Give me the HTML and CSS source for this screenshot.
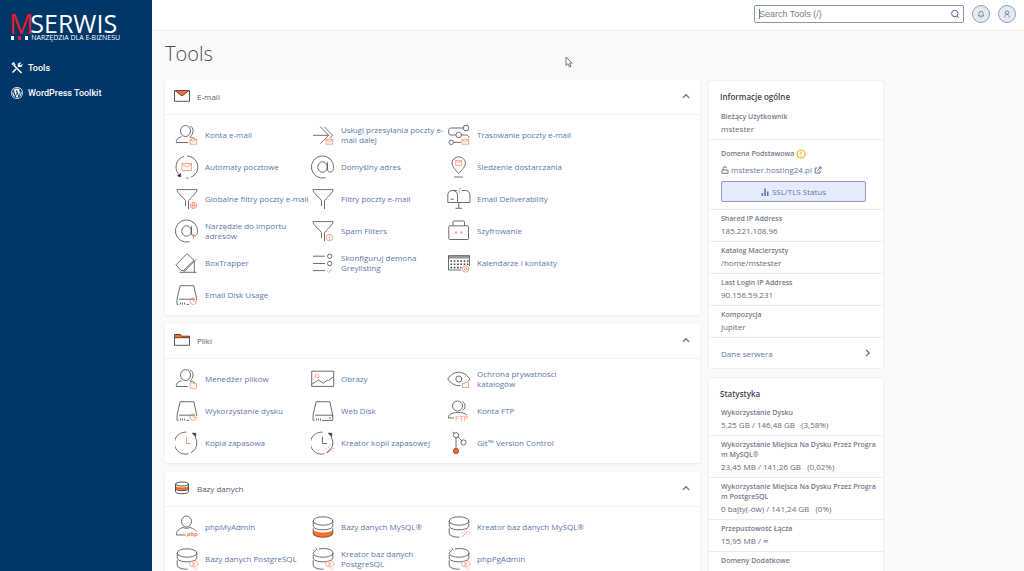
FILE: index.html
```html
<!DOCTYPE html>
<html lang="pl">
<head>
<meta charset="utf-8">
<meta name="viewport" content="width=device-width, initial-scale=1">
<title>cPanel - Tools</title>
<link rel="stylesheet" href="styles.css">
</head>
<body>
<svg class="sprite" aria-hidden="true">
  <symbol id="b-mail" viewBox="0 0 24 24"><path class="o" d="M15 16.3h6.7v4.9H15zM15 16.5l3.3 2.4 3.4-2.4"/></symbol>
  <symbol id="b-user" viewBox="0 0 24 24"><ellipse cx="10.5" cy="8" rx="5" ry="5.5"/><path d="M15 3c2 .7 3.2 2.7 3 5.2-.2 2.5-1.3 4.3-2.6 5.4M13 19.5H1.5c-.8-2.5 1-4.7 5-5.7M14.6 14c2.2.2 4.2.9 5.2 1.7"/></symbol>
  <symbol id="b-filter" viewBox="0 0 24 24"><path d="M2 2.6h20v1.2c-2 3.2-6.8 7.8-8.5 9.9V22M2 2.6v1.2c2 3.2 6.8 7.8 8.5 9.9V19"/></symbol>
  <symbol id="b-at" viewBox="0 0 24 24"><ellipse cx="11.5" cy="12" rx="4.8" ry="5.2"/><path d="M16.4 6.8v7.4c0 4.2 6.2 4.2 6.2-2.2a11.1 11.1 0 1 0-8.2 10.7"/></symbol>
  <symbol id="b-disk" viewBox="0 0 24 24"><path d="M5.2 2.7h13.6l2.9 13.5v1M5.2 2.7 2 16.2v5.2h1.5M4 16.2h16M5.5 19.5v2M7.5 19.5v2M9.5 19.5v2"/></symbol>
  <symbol id="b-clock" viewBox="0 0 24 24"><path d="M11.5 1.2a11 11 0 1 0 2 21.5M16 21.8a11 11 0 0 0 4-16"/><path class="k" d="M17.3 2.2h3.4v3.5z"/></symbol>
  <symbol id="b-pie" viewBox="0 0 24 24"><path class="o" d="M18.3 14.8a3.3 3.3 0 1 0 3.3 3.4h-3.3z"/></symbol>
  <symbol id="b-db" viewBox="0 0 24 24"><ellipse cx="12" cy="6" rx="9.8" ry="4.2"/><path d="M2.2 6v5c0 2.3 4.4 3.8 9.8 3.8s9.8-1.5 9.8-3.8V6M2.2 13.3v5c0 2.2 4.2 3.8 9.5 3.9h1"/></symbol>
  <symbol id="b-wand" viewBox="0 0 24 24"><path class="o" d="M15 22l6-6M17 16l1 1M21.5 19.5l.8.8M20 21.5l.6.6M16 18l-1-.5M19 15v-1M22 17.5h1"/></symbol>
  <symbol id="b-pg" viewBox="0 0 24 24"><path class="o" d="M19 21.5v-6M17 20c-2-1-3-4-1.5-5.5 1-.8 2.5-.3 2.5 1V19zM20.2 15c2-1.3 3.2.4 2.5 2.4-.5 1.5-1.6 2.5-2.5 2.5M20 22.5h1.5"/></symbol>

  <symbol id="i-accounts" viewBox="0 0 24 24"><use href="#b-user"/><use href="#b-mail"/></symbol>
  <symbol id="i-forward" viewBox="0 0 24 24"><path d="M2 12.3h15.5M9.2 3.6l8.5 8.7-5.3 5.3-3 2.9M13.2 3.6l8.3 8.7-2.8 2.9"/><use href="#b-mail"/></symbol>
  <symbol id="i-routing" viewBox="0 0 24 24"><circle cx="19" cy="5" r="2.8"/><circle cx="11.7" cy="12" r="2.8"/><circle cx="4.2" cy="19.3" r="2.2"/><path d="M16.2 5H3.7C1.4 5 1.5 8 1.7 10.2c.2 1.4 1 1.8 2.3 1.8h4.9M14.5 12h4.8c1.8 0 2.6 1 2.6 2.8M6.5 19.3h7.7"/><use href="#b-mail"/></symbol>
  <symbol id="i-auto" viewBox="0 0 24 24"><path d="M12 1a11 11 0 0 1 4 21.2M9 1.4a11 11 0 0 0-4 19M11 23h2.5"/><path class="k" d="M2.5 20.8l3.3-2.3v3.4z"/><path class="o" d="M7 8.5h9.5v7H7zM7 8.8l4.8 3.4 4.7-3.4"/></symbol>
  <symbol id="i-at" viewBox="0 0 24 24"><use href="#b-at"/></symbol>
  <symbol id="i-pin" viewBox="0 0 24 24"><path d="M11.7 18.5C8.5 15 5 11.5 5 7.8a6.8 6.8 0 0 1 13.5 0c0 3.7-3.6 7.2-6.8 10.7zM7 22h9"/><path class="o" d="M8.7 5.4h6v5h-6zM8.7 5.6l3 2.3 3-2.3"/></symbol>
  <symbol id="i-gfilter" viewBox="0 0 24 24"><use href="#b-filter"/><path class="o" d="M18.5 15.2a3.2 3.2 0 1 0 .1 0zM15.3 18.4h6.4M18.5 15.2c-1.5 2-1.5 4.4 0 6.4M18.5 15.2c1.5 2 1.5 4.4 0 6.4"/></symbol>
  <symbol id="i-filter" viewBox="0 0 24 24"><use href="#b-filter"/></symbol>
  <symbol id="i-mailbox" viewBox="0 0 24 24"><path d="M10 15.5H.8V8C.8 5 3 3.5 5.5 3.5S10.5 5 10.5 8v7.5H23V9c0-3.5-1.5-5.5-4.5-5.5h-4M5.5 3.5H10M3.5 12.2H7M11.8 15.5V21M8.5 21.3h6.5"/><path class="o" d="M12.3 6.5V1.7h2"/></symbol>
  <symbol id="i-import" viewBox="0 0 24 24"><use href="#b-at"/><path class="o" d="M18.5 20v-5M16.3 17l2.2-2.2 2.2 2.2"/></symbol>
  <symbol id="i-spam" viewBox="0 0 24 24"><use href="#b-filter"/><circle class="o" cx="18.5" cy="18.5" r="3.3"/><path class="o" d="M18.5 16.5v2.4M18.5 19.7v.9"/></symbol>
  <symbol id="i-lock" viewBox="0 0 24 24"><path d="M2.7 6.8h18c.6 0 .8.3.8.9v12c0 .6-.3.8-.9.8h-18c-.6 0-.8-.3-.8-.9v-12c0-.6.3-.8.9-.8zM6 6.800V3c0-.6.4-1 1-1h9.500c.6 0 1 .4 1 1v3.800"/><path class="of soft" d="M8 12.6h2v2H8zM13.5 12.6h2v2h-2z"/></symbol>
  <symbol id="i-box" viewBox="0 0 24 24"><path d="M1 13.8 12 2.6l7 6.7L8.5 19.500H6zM8.500 21.300l12.700-13M19.300 10v11.300M4.500 21.300h17"/></symbol>
  <symbol id="i-grey" viewBox="0 0 24 24"><path d="M2 5.2h12M2 12.5h12M2 19.6h12"/><circle cx="18.7" cy="5.2" r="2.2"/><circle cx="18.7" cy="12.5" r="2.2"/><path class="o" d="M16 19.8l1.7 1.7 3.3-3.7"/></symbol>
  <symbol id="i-cal" viewBox="0 0 24 24"><path class="g" d="M1.3 4.8h21.2v2.8H1.3z"/><path d="M14 19H1.5V4.6h21V15"/><path class="d" d="M3.5 10h18M3.5 13.3h18M3.5 16.6h11"/><circle class="o" cx="18.7" cy="18" r="3.2"/><circle class="o" cx="18.7" cy="18" r="1.3"/></symbol>
  <symbol id="i-usage" viewBox="0 0 24 24"><use href="#b-disk"/><path d="M11.5 21.4H14"/><use href="#b-pie"/></symbol>
  <symbol id="i-webdisk" viewBox="0 0 24 24"><use href="#b-disk"/><path d="M11 21.4h10.7v-5.2H20"/><path class="of soft" d="M18 18h2v2h-2z"/></symbol>
  <symbol id="i-files" viewBox="0 0 24 24"><use href="#b-user"/><path class="o" d="M15 15.8h2.5l.8.9h3.2v4.6H15z"/></symbol>
  <symbol id="i-images" viewBox="0 0 24 24"><path d="M.7 4.2h22v15.2H.7zM.7 17.3 7.5 13l4.8 3.2 4-3 1.2.3 5-3.7"/><circle class="o" cx="6.2" cy="9" r="1.9"/></symbol>
  <symbol id="i-eye" viewBox="0 0 24 24"><path d="M13.5 18.5C8 19.5 3.5 16 .8 12c5.7-9 16-9 22 0-.7 1-1.3 1.8-2.1 2.5"/><circle cx="11.8" cy="12" r="3"/><path class="o" d="M15.3 16.6h2.5V15.5h3.7v5h-6.2z"/></symbol>
  <symbol id="i-backup" viewBox="0 0 24 24"><use href="#b-clock"/><path class="o" d="M11.5 5.5v7H16"/></symbol>
  <symbol id="i-wizard" viewBox="0 0 24 24"><use href="#b-clock"/><path d="M11.5 5.5v7H16"/><use href="#b-wand"/></symbol>
  <symbol id="i-git" viewBox="0 0 24 24"><circle cx="9" cy="4.2" r="2.6"/><circle cx="16.5" cy="11.5" r="2.6"/><path d="M9 7v10M11 6l3.7 3.7M5.5 1l2 1.5"/><circle class="of k2" cx="9" cy="20" r="2.6"/></symbol>
  <symbol id="i-mysql" viewBox="0 0 24 24"><path class="of" d="M2.2 14.5v4c0 5 19.6 5 19.6 0v-4c-1 4-18.6 4-19.6 0z"/><use href="#b-db"/><path d="M12.5 22.2c5-.1 9.3-1.7 9.3-3.9v-5"/></symbol>
  <symbol id="i-dbwiz" viewBox="0 0 24 24"><use href="#b-db"/><use href="#b-wand"/></symbol>
  <symbol id="i-pg" viewBox="0 0 24 24"><use href="#b-db"/><use href="#b-pg"/></symbol>
  <symbol id="i-pgwiz" viewBox="0 0 24 24"><path d="M8 2c8-1.5 14 1 14 4 0 2.3-4.6 4.2-10 4.2S2.2 8.5 2.2 6l4-4M2 3l1 .5M5 .8V2M2.2 8v3c0 2.3 4.4 3.8 9.8 3.8s9.8-1.5 9.8-3.8V6M2.2 13.3v5c0 2.2 4.2 3.8 9.5 3.9h1"/><use href="#b-pg"/></symbol>
  <symbol id="h-mail" viewBox="0 0 16 14"><path class="ofk" d="M1 1.5h14L8 7z"/><path d="M.5 1.5h15v10.8H.5z"/></symbol>
  <symbol id="h-folder" viewBox="0 0 16 14"><path class="ofk" d="M.5 1.5h6l1 1.7h8v1.5H.5z"/><path d="M.5 1.5v10.8h15V3.2"/></symbol>
  <symbol id="h-db" viewBox="0 0 16 14"><path class="of" d="M1.5 4.5c0 2.5 13 2.5 13 0v3c0 2.5-13 2.5-13 0z"/><ellipse cx="8" cy="3" rx="6.5" ry="2"/><path d="M1.5 3v7.8c0 2.5 13 2.5 13 0V3M1.5 8c0 2.2 13 2.2 13 0"/></symbol>
  <symbol id="chev" viewBox="0 0 8 8"><path d="M1.5 5.5 4 3l2.500 2.500"/></symbol>
</svg>

<div class="shell">
  <aside class="side">
    <a class="logo" href="#" aria-label="MSERWIS">
      <span class="logo-m">M<span class="dots"><i></i><i class="red"></i><i></i></span></span>
      <span class="logo-r"><span class="logo-name">SERWIS</span><span class="logo-sub">NARZĘDZIA DLA E-BIZNESU</span></span>
    </a>
    <nav class="nav">
      <a href="#"><svg class="nav-ic" viewBox="0 0 12 12"><path d="M2.5 3 10.5 11M1 2.6 2.6 1l1.6 2.5M7 5l2-2M1.5 10.5 5 7" fill="none" stroke="currentColor" stroke-width="1.5"/><path d="M10.3.8 8.5 2.5l1 1L11.3 1.8a2.4 2.4 0 0 1-3.3 3L7 4a2.4 2.4 0 0 1 3.3-3.2z" fill="currentColor"/></svg>Tools</a>
      <a href="#"><svg class="nav-ic" viewBox="0 0 24 24" fill="currentColor"><path d="M12 0a12 12 0 1 0 0 24 12 12 0 0 0 0-24zm0 1.3a10.7 10.7 0 1 1 0 21.4 10.7 10.7 0 0 1 0-21.4z"/><path d="M2.9 12c0 3.600 2.100 6.700 5.100 8.200L3.700 8.300A9 9 0 0 0 2.900 12zm15.200-.5c0-1.100-.4-1.900-.7-2.500-.5-.7-.9-1.300-.9-2.100 0-.8.6-1.600 1.500-1.600A9.100 9.100 0 0 0 4.400 7h2.700c.5 0 .5.7 0 .7l-1 .1 3.300 9.800 2-5.900-1.400-3.900-1-.1c-.5 0-.4-.7.1-.7h4.300c.5 0 .6.7.1.7l-1 .1 3.300 9.700.9-3c.4-1.200.4-2.200.4-3zm-6 1.300-2.700 7.900a9 9 0 0 0 5.600-.1zm7.900-5.200c.2 1.600-.1 3.100-.7 4.600l-2.800 8A9.100 9.100 0 0 0 20 7.600z"/></svg>WordPress Toolkit</a>
    </nav>
  </aside>

  <div class="page">
    <header class="top">
      <form class="search" role="search">
        <input type="search" aria-label="Search Tools" placeholder="Search Tools (/)">
        <button type="button" aria-label="Search"><svg viewBox="0 0 10 10"><circle cx="4.8" cy="4.5" r="3.2"/><path d="M7 7l1.8 1.8"/></svg></button>
      </form>
      <button class="round" type="button" aria-label="Notifications"><svg viewBox="0 0 10 10"><path d="M1.5 7.5c1-1 .9-2 .9-3.3a2.6 2.6 0 0 1 5.2 0c0 1.3-.1 2.3.9 3.3zM4 9h2"/></svg></button>
      <button class="round" type="button" aria-label="User"><svg viewBox="0 0 10 10"><circle cx="5" cy="3.3" r="2.2"/><path d="M2.2 9.3c0-2 1-3.2 2.2-3.8h1.2c1.2.6 2.2 1.8 2.2 3.8"/></svg></button>
    </header>

    <main class="main">
      <h1>Tools</h1>
      <div class="cols">
        <div class="stack">
          <section class="card">
            <header class="card-head"><svg class="h-ic"><use href="#h-mail"/></svg><h2>E-mail</h2><button type="button" aria-label="Collapse E-mail"><svg><use href="#chev"/></svg></button></header>
            <div class="tools">
              <a href="#"><svg><use href="#i-accounts"/></svg><span>Konta e-mail</span></a>
              <a href="#"><svg><use href="#i-forward"/></svg><span>Usługi przesyłania poczty e-mail dalej</span></a>
              <a href="#"><svg><use href="#i-routing"/></svg><span>Trasowanie poczty e-mail</span></a>
              <a href="#"><svg><use href="#i-auto"/></svg><span>Automaty pocztowe</span></a>
              <a href="#"><svg><use href="#i-at"/></svg><span>Domyślny adres</span></a>
              <a href="#"><svg><use href="#i-pin"/></svg><span>Śledzenie dostarczania</span></a>
              <a href="#"><svg><use href="#i-gfilter"/></svg><span>Globalne filtry poczty e-mail</span></a>
              <a href="#"><svg><use href="#i-filter"/></svg><span>Filtry poczty e-mail</span></a>
              <a href="#"><svg><use href="#i-mailbox"/></svg><span>Email Deliverability</span></a>
              <a href="#"><svg><use href="#i-import"/></svg><span>Narzędzie do importu adresów</span></a>
              <a href="#"><svg><use href="#i-spam"/></svg><span>Spam Filters</span></a>
              <a href="#"><svg><use href="#i-lock"/></svg><span>Szyfrowanie</span></a>
              <a href="#"><svg><use href="#i-box"/></svg><span>BoxTrapper</span></a>
              <a href="#"><svg><use href="#i-grey"/></svg><span>Skonfiguruj demona Greylisting</span></a>
              <a href="#"><svg><use href="#i-cal"/></svg><span>Kalendarze i kontakty</span></a>
              <a href="#"><svg><use href="#i-usage"/></svg><span>Email Disk Usage</span></a>
            </div>
          </section>
          <section class="card">
            <header class="card-head"><svg class="h-ic"><use href="#h-folder"/></svg><h2>Pliki</h2><button type="button" aria-label="Collapse Pliki"><svg><use href="#chev"/></svg></button></header>
            <div class="tools">
              <a href="#"><svg><use href="#i-files"/></svg><span>Menedżer plików</span></a>
              <a href="#"><svg><use href="#i-images"/></svg><span>Obrazy</span></a>
              <a href="#"><svg><use href="#i-eye"/></svg><span>Ochrona prywatności katalogów</span></a>
              <a href="#"><svg><use href="#i-usage"/></svg><span>Wykorzystanie dysku</span></a>
              <a href="#"><svg><use href="#i-webdisk"/></svg><span>Web Disk</span></a>
              <a href="#"><svg viewBox="0 0 24 24"><ellipse cx="10.5" cy="7" rx="5" ry="5"/><path d="M15 2.5c2 .7 3.2 2.5 3 4.8-.2 2-1.3 3.8-2.6 4.7M7 19H1.5c-.5-3 3.5-5.5 9-5.5 4 0 7.5.5 9.5 2.5"/><text x="8" y="22" class="tag">FTP</text></svg><span>Konta FTP</span></a>
              <a href="#"><svg><use href="#i-backup"/></svg><span>Kopia zapasowa</span></a>
              <a href="#"><svg><use href="#i-wizard"/></svg><span>Kreator kopii zapasowej</span></a>
              <a href="#"><svg><use href="#i-git"/></svg><span>Git™ Version Control</span></a>
            </div>
          </section>
          <section class="card">
            <header class="card-head"><svg class="h-ic"><use href="#h-db"/></svg><h2>Bazy danych</h2><button type="button" aria-label="Collapse Bazy danych"><svg><use href="#chev"/></svg></button></header>
            <div class="tools">
              <a href="#"><svg viewBox="0 0 24 24"><ellipse cx="11.5" cy="6.5" rx="5" ry="5.5"/><path d="M10.5 20H1.5c-.5-4 3-6.5 6.5-7.5 2 1 5 1 7 0 3.5 1 5.5 2.5 6 4"/><text x="12" y="21" class="tag php">php</text></svg><span>phpMyAdmin</span></a>
              <a href="#"><svg><use href="#i-mysql"/></svg><span>Bazy danych MySQL®</span></a>
              <a href="#"><svg><use href="#i-dbwiz"/></svg><span>Kreator baz danych MySQL®</span></a>
              <a href="#"><svg><use href="#i-pg"/></svg><span>Bazy danych PostgreSQL</span></a>
              <a href="#"><svg><use href="#i-pgwiz"/></svg><span>Kreator baz danych PostgreSQL</span></a>
              <a href="#"><svg><use href="#i-pgwiz"/></svg><span>phpPgAdmin</span></a>
            </div>
          </section>
        </div>

        <div class="stack info">
          <section class="card general">
            <h2>Informacje ogólne</h2>
            <div class="row"><h3>Bieżący Użytkownik</h3><p>mstester</p></div>
            <div class="row domain">
              <h3>Domena Podstawowa <svg class="warn" viewBox="0 0 10 10"><circle cx="5" cy="5" r="4"/><path d="M5 2.5v3M5 6.5v1"/></svg></h3>
              <p><svg class="mini" viewBox="0 0 8 8"><path d="M1 4h6v3.3H1zM2.3 4V2.2a1.6 1.6 0 0 1 3.2 0"/></svg><a href="#">mstester.hosting24.pl</a><svg class="mini ext" viewBox="0 0 8 8"><path d="M3.5 2H1.2v5H6V4.5M3.3 4.7 7 1M4.8 1H7v2.3"/></svg></p>
              <button class="ssl" type="button"><svg viewBox="0 0 8 8"><path d="M.5 5h1.6v3H.5zM3.2.5h1.6V8H3.2zM5.9 3.5h1.6V8H5.9z"/></svg>SSL/TLS Status</button>
            </div>
            <div class="row"><h3>Shared IP Address</h3><p>185.221.108.96</p></div>
            <div class="row"><h3>Katalog Macierzysty</h3><p>/home/mstester</p></div>
            <div class="row"><h3>Last Login IP Address</h3><p>90.156.59.231</p></div>
            <div class="row"><h3>Kompozycja</h3><p>jupiter</p></div>
            <a class="more" href="#">Dane serwera<svg><use href="#chev"/></svg></a>
          </section>
          <section class="card">
            <h2>Statystyka</h2>
            <div class="row"><h3>Wykorzystanie Dysku</h3><p>5,25 GB / 146,48 GB &nbsp; (3,58%)</p></div>
            <div class="row"><h3>Wykorzystanie Miejsca Na Dysku Przez Program MySQL®</h3><p>23,45 MB / 141,26 GB &nbsp; (0,02%)</p></div>
            <div class="row"><h3>Wykorzystanie Miejsca Na Dysku Przez Program PostgreSQL</h3><p>0 bajty(-ów) / 141,24 GB &nbsp; (0%)</p></div>
            <div class="row"><h3>Przepustowość Łącza</h3><p>15,95 MB / ∞</p></div>
            <div class="row"><h3>Domeny Dodatkowe</h3><p>0 / ∞</p></div>
          </section>
        </div>
      </div>
    </main>
  </div>
</div>
<svg class="pointer" viewBox="0 0 8 12" aria-hidden="true"><path d="M1 1v8.5l2-1.8 1.5 3.3 1.5-.7L4.5 7.2H7z"/></svg>
</body>
</html>
```
FILE: styles.css
```css
* { box-sizing: border-box; }
body {
  margin: 0;
  font-family: "Open Sans", "Noto Sans", sans-serif;
  font-size: 8px;
  color: #666b76;
  background: #fafafa;
}
h1, h2, h3, p { margin: 0; }
a { color: #6076a8; text-decoration: none; }
button { font: inherit; padding: 0; border: 0; background: none; cursor: pointer; }
.sprite { position: absolute; width: 0; height: 0; }

.shell { display: flex; height: 100vh; overflow: hidden; }

/* sidebar */
.side { flex: 0 0 152px; background: #003668; }
.logo { display: flex; padding: 8px 0 0 9px; height: 42px; color: #fff; }
.logo-m { position: relative; color: #e31e2d; font-size: 27px; font-weight: 500; line-height: 32px; }
.dots { position: absolute; left: 2px; top: 28px; display: flex; gap: 4px; }
.dots i { width: 3px; height: 4px; background: #fff; }
.dots .red { background: #e31e2d; }
.logo-r { display: flex; flex-direction: column; margin-left: -3px; padding-top: 4px; }
.logo-name { font-size: 25px; font-weight: 500; line-height: 22px; }
.logo-sub { padding-left: 1px; font-size: 7px; font-weight: 500; line-height: 8px; white-space: nowrap; }
.nav { display: flex; flex-direction: column; gap: 9px; padding: 18px 0 0 11px; }
.nav a { display: flex; align-items: center; gap: 5px; height: 16px; color: #fff; font: 500 9px/16px Roboto, sans-serif; }
.nav-ic { width: 12px; height: 12px; }

/* top bar */
.page { flex: 1; min-width: 0; display: flex; flex-direction: column; }
.top {
  display: flex; justify-content: flex-end; align-items: center; gap: 8px;
  height: 31px; flex: none; padding: 0 8px 3px 8px;
  background: #fff; border-bottom: 1px solid #ececee;
}
.search { display: flex; align-items: center; width: 210px; height: 18px; border: 1px solid #8496bb; border-radius: 2px; background: #fff; }
.search input {
  flex: 1; min-width: 0; height: 16px; border: 0; outline: 0; padding: 0 4px; appearance: none;
  font: 9px "Liberation Sans", Arial, sans-serif; color: #333;
  background: linear-gradient(#777, #777) 4px 50% / 1px 10px no-repeat;
}
.search input::placeholder { color: #808080; opacity: 1; }
.search button { width: 17px; height: 16px; display: grid; place-items: center; }
.search svg, .round svg { width: 10px; height: 10px; fill: none; stroke: #4d6396; stroke-width: 1; }
.round { display: grid; place-items: center; width: 18px; height: 18px; border: 1px solid #8d9fbc; border-radius: 50%; background: #e4eaf1; }
.round svg { width: 8px; height: 8px; stroke: #5c6f8f; }

/* content */
.main { flex: 1; min-height: 0; overflow: auto; scrollbar-width: none; padding: 9px 13px; }
h1 { font-size: 20px; font-weight: 300; line-height: 28px; margin-bottom: 12px; color: #4a4e55; }
.cols { display: grid; grid-template-columns: minmax(0, 1fr) 176px; gap: 8px; align-items: start; max-width: 719px; }
.stack { display: flex; flex-direction: column; gap: 9px; }
.card { background: #fff; border-radius: 2px; box-shadow: 0 1px 3px rgba(0, 0, 0, .08); }
.card-head { display: flex; align-items: center; height: 35px; padding: 0 9px 2px; border-bottom: 1px solid #edf0f6; }
.card-head h2 { flex: 1; margin-left: 7px; font-size: 8px; font-weight: 400; color: #555d6b; }
.h-ic { width: 16px; height: 14px; fill: none; stroke: #555; stroke-width: 1; }
.card-head button, .card-head button svg { display: block; width: 10px; height: 10px; }
.card-head button svg, .more svg { fill: none; stroke: #64738f; stroke-width: 1; }

.tools { display: grid; grid-template-columns: repeat(auto-fill, 136px); padding: 4px 9px 4px 10px; }
.tools a { display: flex; align-items: center; gap: 6px; height: 32px; line-height: 10px; }
.tools span { flex: none; width: 110px; }
.tools svg { flex: none; width: 24px; height: 24px; fill: none; stroke: #4a4a4a; stroke-width: .8; overflow: visible; }
.o { stroke: #ff8c69; }
.of { fill: #ff6c2c; stroke: none; }
.soft { fill: #ff9a7a; }
.k2 { stroke: #7a3a20; }
.ofk { fill: #ff6c2c; stroke: #7a3a20; }
.k { fill: #333; }
.g { fill: #999; stroke: none; }
.d { stroke: #444; stroke-width: 1.6; stroke-dasharray: 1.6 1.7; }
.tag { font: 8px "Open Sans", sans-serif; fill: #ff8c69; stroke: none; }
.php { font: italic 700 6px "Open Sans", sans-serif; fill: #ff7a50; }

/* information column */
.info { gap: 8px; }
.info .card { border: 1px solid #f0f0f1; box-shadow: none; }
.info h2 { padding: 8px 11px 3px; font-size: 8px; line-height: 15px; font-weight: 600; color: #3d4452; }
.info .general h2 { padding-bottom: 4px; }
.row { padding: 4px 4px 3px 12px; border-bottom: 1px solid #ececee; }
.row h3 { font-size: 7px; line-height: 10px; font-weight: 600; color: #74798a; word-break: break-all; }
.row p { font-size: 8px; line-height: 14px; }
.row.domain { padding: 9px 17px 7px 12px; }
.domain h3 { display: flex; align-items: center; gap: 2px; }
.domain p { display: flex; align-items: center; gap: 2px; margin: 4px 0; }
.warn { width: 10px; height: 10px; fill: none; stroke: #f2b619; stroke-width: 1.2; }
.mini { width: 8px; height: 8px; fill: none; stroke: #777; stroke-width: 1; }
.ext { stroke: #6076a8; }
.ssl {
  display: flex; align-items: center; justify-content: center; gap: 3px;
  width: 100%; height: 21px; border: 1px solid #8b9bcb; border-radius: 2px;
  background: #e6ebfb; color: #6076a8;
}
.ssl svg { width: 8px; height: 8px; fill: #6076a8; }
.more { display: flex; align-items: center; justify-content: space-between; height: 30px; padding: 0 10px 0 12px; }
.more svg { width: 10px; height: 10px; transform: rotate(90deg); }

.pointer { position: absolute; left: 565px; top: 56px; width: 8px; height: 12px; fill: #fff; stroke: #555; stroke-width: .8; }
```
